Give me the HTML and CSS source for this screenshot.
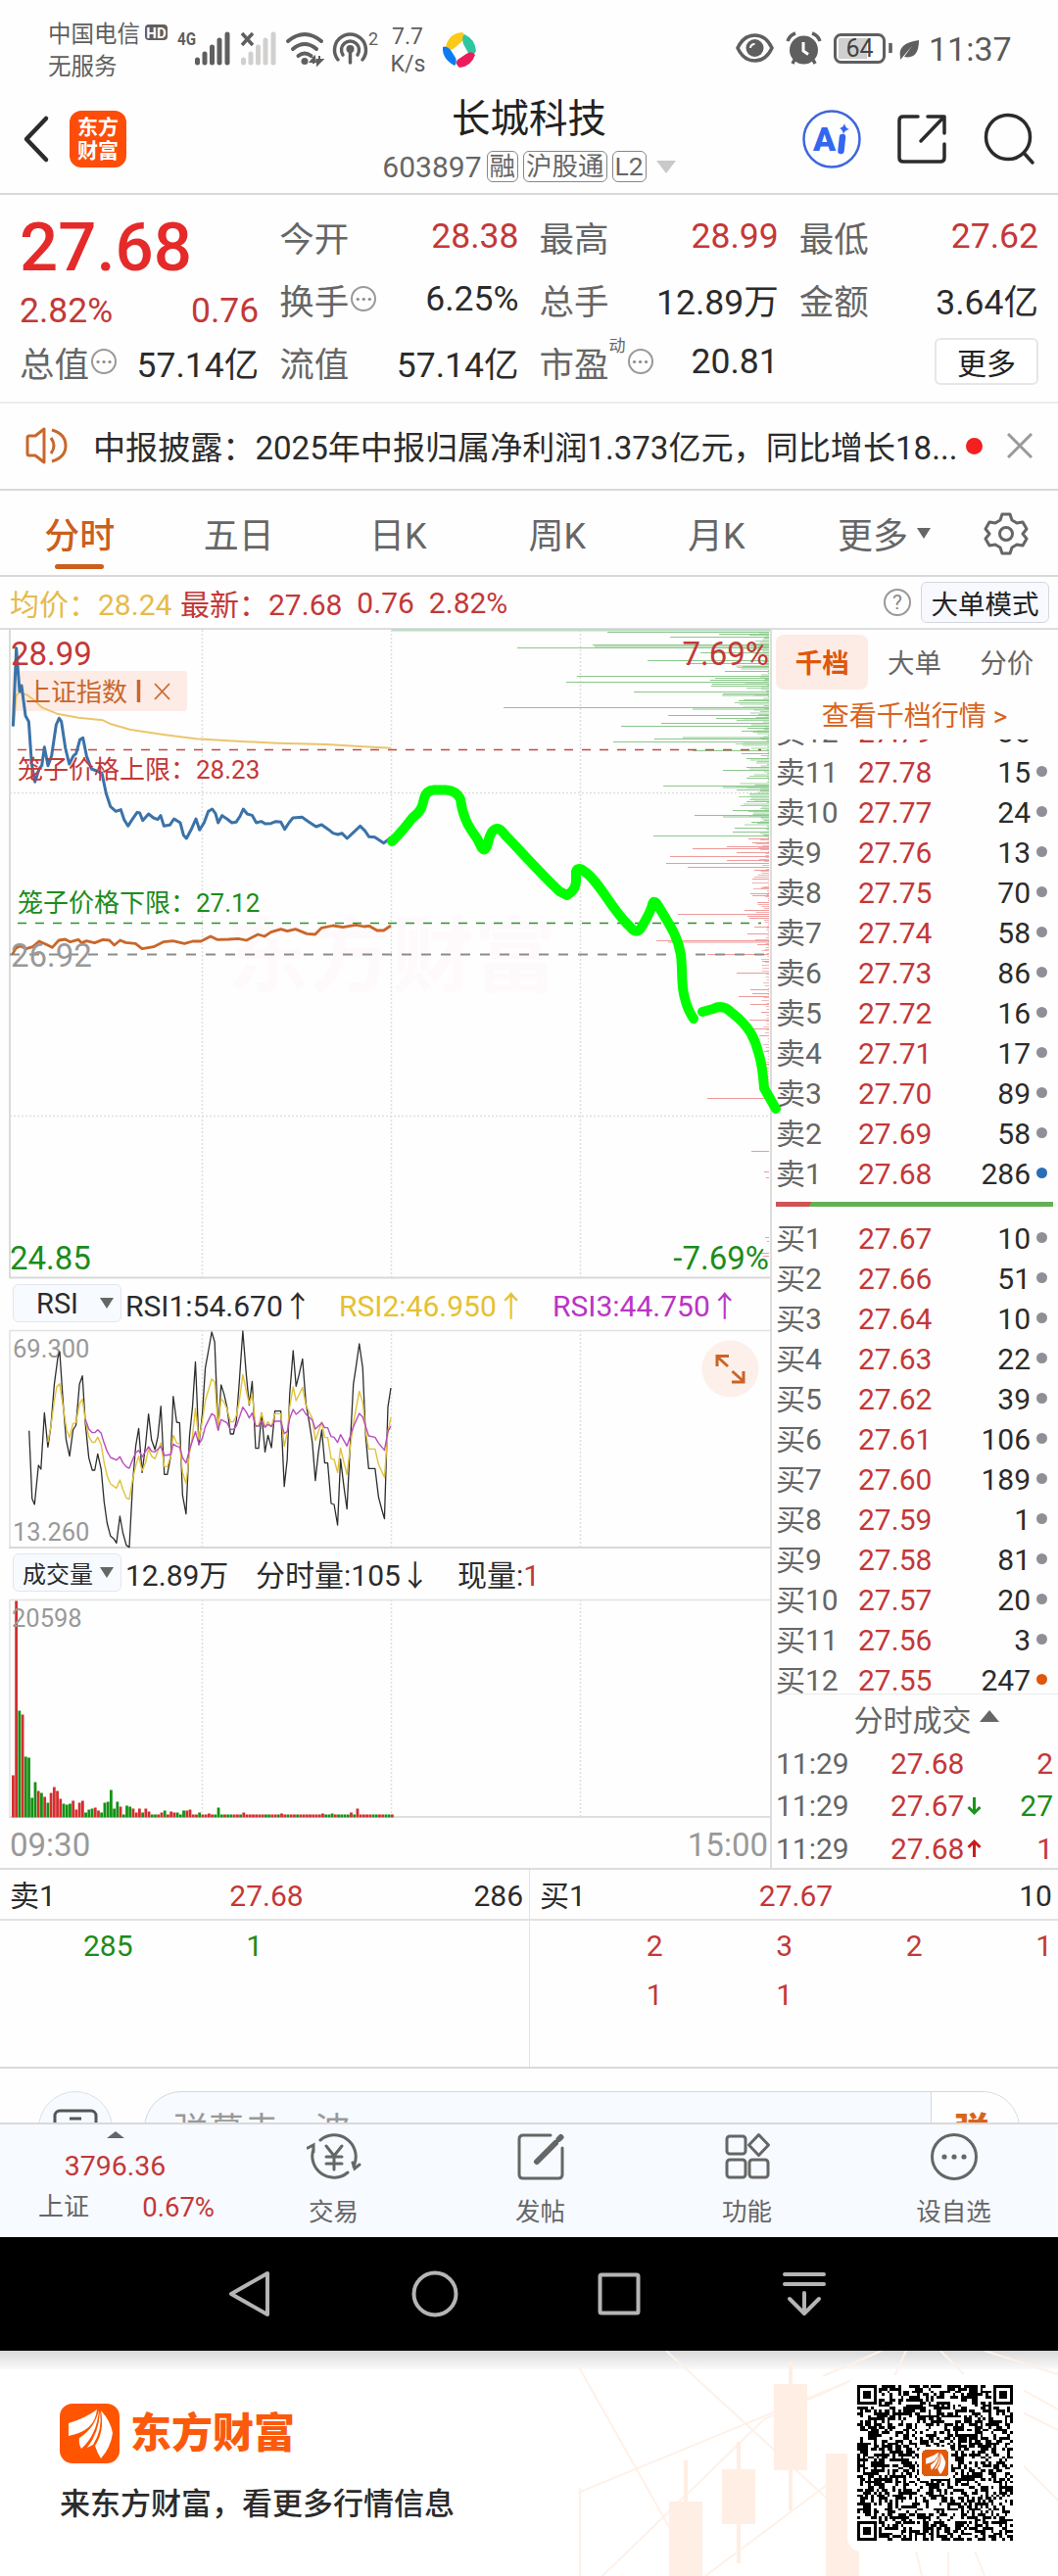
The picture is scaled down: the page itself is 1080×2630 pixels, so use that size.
FILE: index.html
```html
<!DOCTYPE html>
<html lang="zh-CN">

<head>
    <meta charset="UTF-8">
    <meta name="viewport" content="width=device-width, initial-scale=1.0">
    <title>长城科技 603897</title>
    <link rel="stylesheet" href="styles.css">
</head>

<body>
    <!-- Status bar -->
    <div class="status-bar">
        <div class="carrier">
            <div>中国电信</div>
            <div>无服务</div>
        </div>
        <svg class="status-left" width="350" height="60" viewBox="145 19 350 60">
            <rect x="148" y="25" width="23" height="16" rx="4" fill="#5f5f5f" />
            <text x="159.5" y="38.500" font-size="15" font-weight="700" fill="#fff" text-anchor="middle">HD</text>
            <text x="181" y="46" font-size="18" font-weight="700" fill="#5f5f5f" textLength="19" lengthAdjust="spacingAndGlyphs">4G</text>
            <path d="M201.500 61v3M209 55v9M216.500 48v16M224 41v23M232 35v29" stroke="#5f5f5f" stroke-width="5" stroke-linecap="round" />
            <path d="M248.500 61v3M256 55v9M263.500 48v16M271 41v23M279 35v29" stroke="#d2cfcf" stroke-width="5" stroke-linecap="round" />
            <path d="M247 34l11 12M258 34l-11 12" stroke="#5f5f5f" stroke-width="3.500" />
            <g fill="none" stroke="#5f5f5f" stroke-width="4" stroke-linecap="round">
                <path d="M294 42q17-14 34 0M299 50q12-10 24 0M304.500 57q6.500-5 13 0" />
                <path d="M345 61a16 16 0 1 1 25 0M350 56a9 9 0 1 1 15 0" stroke-width="3.500" />
                <path d="M357.500 51v13" stroke-width="3.500" />
            </g>
            <circle cx="311" cy="62.500" r="3.500" fill="#5f5f5f" />
            <circle cx="357.500" cy="50" r="4" fill="#5f5f5f" />
            <path d="M321 58l-4 5h5zM320 58v7M324 66l5-5h-5zM326 57v8" fill="#5f5f5f" stroke="#5f5f5f" stroke-width="2" />
            <text x="376" y="46" font-size="18" fill="#5f5f5f">2</text>
            <text x="416" y="45" font-size="23" fill="#5f5f5f" text-anchor="middle">7.7</text>
            <text x="416.500" y="73" font-size="23" fill="#5f5f5f" text-anchor="middle">K/s</text>
            <path d="M455 48q3-14 17-15q4 3 1 8l-9 8q-5 4-9-1z" fill="#fbc918" />
            <path d="M474 35q11 5 12 17q-3 6-8 2l-5-9q-2-7 1-10z" fill="#2cc7a0" />
            <path d="M485 56q-4 12-16 13q-5-4-2-8l9-6q6-4 9 1z" fill="#ec1c5a" />
            <path d="M464 67q-13-7-12-19q4-2 8 3l5 8q2 5-1 8z" fill="#0d7cf2" />
        </svg>
        <svg class="status-right" width="290" height="60" viewBox="745 19 290 60">
            <g fill="none" stroke="#5f5f5f" stroke-width="3.500">
                <path d="M753 49q6-13 17.500-13t17.500 13q-6 13-17.500 13t-17.500-13z" />
                <rect x="852.500" y="35.500" width="50" height="28" rx="6" stroke-width="3" />
            </g>
            <circle cx="770.500" cy="49" r="9" fill="#5f5f5f" />
            <path d="M770.500 45a4.500 4.500 0 0 0-4.500 4" stroke="#fff" stroke-width="2" fill="none" />
            <circle cx="820.500" cy="51" r="14.500" fill="#5f5f5f" />
            <path d="M820 43v9l5 3.500" fill="none" stroke="#fff" stroke-width="3" />
            <path d="M804 42q2-6 8-8M837 42q-2-6-8-8M811 61l-2 4M830 61l2 4" fill="none" stroke="#5f5f5f" stroke-width="3.500" />
            <rect x="856" y="39" width="29" height="21" fill="#cfcfcf" />
            <text x="877.500" y="57.500" font-size="25" fill="#444" text-anchor="middle">64</text>
            <path d="M909 44v10" stroke="#5f5f5f" stroke-width="3.500" />
            <path d="M919 58q-3-14 19-17q0 20-15 17l8-11-12 14z" fill="#5f5f5f" />
            <text x="948" y="62" font-size="34" fill="#5a5a5a">11:37</text>
        </svg>
    </div>

    <!-- Title bar -->
    <header class="header">
        <div class="header-left">
            <svg width="30" height="50" viewBox="0 0 30 50"><path d="M26 4L6 25l20 21" fill="none" stroke="#2b2b2b" stroke-width="4.500" stroke-linecap="round" stroke-linejoin="round" /></svg>
            <div class="app-logo"><span>东方</span><span>财富</span></div>
        </div>
        <div class="header-title">
            <h1>长城科技</h1>
            <div class="code">603897<span class="badge">融</span><span class="badge">沪股通</span><span class="badge">L2</span><i class="caret"></i></div>
        </div>
        <div class="header-right">
            <svg width="60" height="60" viewBox="0 0 60 60">
                <circle cx="30" cy="30" r="28.500" fill="none" stroke="#3f66dc" stroke-width="2.500" />
                <text x="11" y="42" font-size="34" font-weight="900" fill="#3466f0" textLength="24">A</text>
                <path d="M41 28l-1.500 14" stroke="#3466f0" stroke-width="6.500" stroke-linecap="round" />
                <path d="M43 14q1 5 5 6q-5 1-6 5q-1-5-4-6q4-1 5-5z" fill="#3466f0" />
            </svg>
            <svg width="52" height="52" viewBox="0 0 52 52"><path d="M22 3H7q-4 0-4 4v38q0 4 4 4h38q4 0 4-4V31M32 3h17v17M49 3L25 28" fill="none" stroke="#2b2b2b" stroke-width="3.500" stroke-linecap="round" stroke-linejoin="round" /></svg>
            <svg width="54" height="54" viewBox="0 0 54 54"><circle cx="26" cy="25" r="22.500" fill="none" stroke="#2b2b2b" stroke-width="3.500" /><path d="M42 41l9 10" stroke="#2b2b2b" stroke-width="3.500" stroke-linecap="round" /></svg>
        </div>
    </header>

    <!-- Quote numbers -->
    <section class="quote">
        <div class="price-box">
            <div class="price">27.68</div>
            <div class="change"><span>2.82%</span><span>0.76</span></div>
        </div>
        <div class="cell"><label>今开</label><b class="red">28.38</b></div>
        <div class="cell"><label>最高</label><b class="red">28.99</b></div>
        <div class="cell"><label>最低</label><b class="red">27.62</b></div>
        <div class="cell"><label>换手</label><i class="dots">···</i><b>6.25%</b></div>
        <div class="cell"><label>总手</label><b>12.89万</b></div>
        <div class="cell"><label>金额</label><b>3.64亿</b></div>
        <div class="cell"><label>总值</label><i class="dots">···</i><b>57.14亿</b></div>
        <div class="cell"><label>流值</label><b>57.14亿</b></div>
        <div class="cell"><label>市盈</label><sup>动</sup><i class="dots">···</i><b>20.81</b></div>
        <div class="cell"><button class="btn-more">更多</button></div>
    </section>

    <!-- News strip -->
    <div class="news">
        <svg width="46" height="40" viewBox="0 0 46 40">
            <path d="M3 12q0-2 2-2h6L20 3v34l-9-7H5q-2 0-2-2zM27 12q6 8 0 16M28 4q14 4 14 16t-14 16" fill="none" stroke="#c8682c" stroke-width="3" stroke-linejoin="round" />
        </svg>
        <span class="news-text">中报披露：2025年中报归属净利润1.373亿元，同比增长18...</span>
        <i class="news-dot"></i>
        <svg width="26" height="26" viewBox="0 0 26 26"><path d="M1 1l24 24M25 1L1 25" stroke="#999" stroke-width="3" /></svg>
    </div>

    <!-- Period tabs -->
    <nav class="tabs">
        <span class="tab active">分时</span>
        <span class="tab">五日</span>
        <span class="tab">日K</span>
        <span class="tab">周K</span>
        <span class="tab">月K</span>
        <span class="tab tab-more">更多<i class="caret-dark"></i></span>
        <svg width="46" height="46" viewBox="0 0 46 46" fill="none" stroke="#666" stroke-width="3" stroke-linejoin="round">
            <path d="M19 3h8l2 6 5 3 6-1 4 7-4 5 4 5-4 7-6-1-5 3-2 6h-8l-2-6-5-3-6 1-4-7 4-5-4-5 4-7 6 1 5-3z" />
            <circle cx="23" cy="23" r="6.500" />
        </svg>
    </nav>

    <div class="info-row">
        <span class="avg">均价：28.24</span>
        <span class="last">最新：27.68</span>
        <span class="last">0.76</span>
        <span class="last">2.82%</span>
        <i class="help">?</i>
        <button class="btn-mode">大单模式</button>
    </div>

    <!-- Charts and order book -->
    <main class="board">
        <div class="charts">
            <svg class="chart price-chart" width="787" height="663" viewBox="0 643 787 663">
                <text class="watermark" x="232" y="1006">东方财富</text>
                <g class="grid">
                    <path d="M206.500 643v661M399.500 643v661M592.500 643v661M10 809.500h776M10 1139.500h776" />
                </g>
                <path d="M10 643v662" stroke="#d9dcdc" stroke-width="2" />
                <path d="M10 1304.500h776" stroke="#d8d8d8" stroke-width="2" />
                <rect x="12" y="685" width="179" height="41" rx="4" fill="#fdebe5" />
                <g id="depth"></g>
                <path d="M18 765.500h759" stroke="#bf4a4a" stroke-width="1.500" stroke-dasharray="9 9" />
                <path d="M18 942.500h759" stroke="#2f8f2f" stroke-width="1.500" stroke-dasharray="9 9" />
                <path d="M10 974.500h774" stroke="#8c8c8c" stroke-width="1.800" stroke-dasharray="10 10" />
                <g id="priceLines" class="lines" transform="translate(0 640) scale(.333333)"></g>
                <text class="lb red" x="11" y="679">28.99</text>
                <text class="lb red" x="785" y="679" text-anchor="end">7.69%</text>
                <text class="lb green" x="10" y="1296">24.85</text>
                <text class="lb green" x="785" y="1296" text-anchor="end">-7.69%</text>
                <text class="lb gray" x="11" y="987">26.92</text>
                <text class="sm orange" x="26" y="716">上证指数</text>
                <path d="M141.500 694v23" stroke="#c8682c" stroke-width="3.500" />
                <path d="M158 698l15 16M173 698l-15 16" stroke="#c8682c" stroke-width="1.800" />
                <text class="sm red" x="18" y="795">笼子价格上限：28.23</text>
                <text class="sm green" x="18" y="931">笼子价格下限：27.12</text>
                <g class="marker">
                    <path d="M400 859C408 852 414 844 421 835C430 828 431 824 433 815Q435 807 443 806.500H455Q466 807 470 816C472 832 477 843 487 856L492 866Q496 870 498 861Q501 846 508 846Q511 846 516 853C530 867 545 885 571 910L579 914Q589 908 588 897V890Q590 884 597 890C612 900 625 930 643 946Q649 954 654 948C660 938 665 929 666 923Q668 918 672 925C682 942 692 955 695 975C697 990 695 1006 699 1019C701 1028 704 1034 708 1040" />
                    <path d="M717 1033L728 1030Q738 1025 747 1034C763 1046 770 1058 774 1074C778 1086 779 1096 780 1111L792 1132" />
                </g>
            </svg>

            <div class="toolbar">
                <span class="select"><em>RSI</em><i class="caret-dark"></i></span>
                <span class="w218">RSI1:54.670↑</span>
                <span class="w218 yellow">RSI2:46.950↑</span>
                <span class="purple">RSI3:44.750↑</span>
            </div>

            <svg class="chart" width="787" height="223" viewBox="0 1358 787 223">
                <g class="grid"><path d="M206.500 1358v222M399.500 1358v222M592.500 1358v222" /></g>
                <path d="M10 1358.500h776M10 1358v222" stroke="#e0e2e2" stroke-width="1.500" />
                <path d="M9 1580h777" stroke="#d8d8d8" stroke-width="2" />
                <text class="xs gray" x="13" y="1386">69.300</text>
                <text class="xs gray" x="13" y="1573">13.260</text>
                <g id="rsiLines" class="lines" transform="translate(0 1280) scale(.50378 .333333)"></g>
                <circle cx="745.500" cy="1397.500" r="29" fill="#fdefe9" />
                <path d="M743 1395l-11-10M732 1395v-10.500h12M747.500 1400l11 10M759 1400v11h-12" fill="none" stroke="#cb6427" stroke-width="3" />
            </svg>

            <div class="toolbar">
                <span class="select small"><em>成交量</em><i class="caret-dark"></i></span>
                <span class="w132">12.89万</span>
                <span class="w206">分时量:105↓</span>
                <span>现量:<b class="red">1</b></span>
            </div>

            <svg class="chart" width="787" height="223" viewBox="0 1633 787 223">
                <g class="grid"><path d="M206.500 1633v222M399.500 1633v222M592.500 1633v222" /></g>
                <path d="M10 1633.500h776M10 1633v222" stroke="#e0e2e2" stroke-width="1.500" />
                <path d="M9 1855h777" stroke="#dedede" stroke-width="2" />
                <g id="volume"></g>
                <text class="xs gray" x="12" y="1661">20598</text>
            </svg>
            <div class="time-axis"><span>09:30</span><span>15:00</span></div>
        </div>

        <aside class="book">
            <div class="book-tabs"><span class="on">千档</span><span>大单</span><span>分价</span></div>
            <div class="book-link">查看千档行情 &gt;</div>
            <div class="asks" id="asks"></div>
            <div class="ratio"><i></i></div>
            <div class="bids" id="bids"></div>
            <div class="ticks-title">分时成交<i class="caret-up"></i></div>
            <div class="tick"><span>11:29</span><b class="red">27.68</b><b class="qty red">2</b></div>
            <div class="tick"><span>11:29</span><b class="red">27.67</b><svg width="15" height="20" viewBox="0 0 15 20"><path d="M7.500 1v16M1.500 11l6 6 6-6" fill="none" stroke="#1b941b" stroke-width="3" /></svg><b class="qty green">27</b></div>
            <div class="tick"><span>11:29</span><b class="red">27.68</b><svg width="15" height="20" viewBox="0 0 15 20"><path d="M7.500 19V3M1.500 9l6-6 6 6" fill="none" stroke="#c81e1e" stroke-width="3" /></svg><b class="qty red">1</b></div>
        </aside>
    </main>

    <!-- Queue details -->
    <section class="queue">
        <div class="queue-side">
            <div class="queue-head"><span>卖1</span><b class="red">27.68</b><span>286</span></div>
            <div class="queue-grid green"><span>285</span><span>1</span></div>
        </div>
        <div class="queue-side">
            <div class="queue-head"><span>买1</span><b class="red">27.67</b><span>10</span></div>
            <div class="queue-grid red"><span>2</span><span>3</span><span>2</span><span>1</span><span>1</span><span>1</span></div>
        </div>
    </section>

    <div class="danmu">
        <div class="danmu-btn">
            <svg width="46" height="40" viewBox="0 0 46 40"><rect x="2" y="2" width="42" height="36" rx="5" fill="none" stroke="#555" stroke-width="3" /><path d="M17 10h12" stroke="#555" stroke-width="3" /></svg>
        </div>
        <div class="danmu-input"><span>弹幕走一波</span><b>弹</b></div>
    </div>

    <nav class="bottom-nav">
        <div class="index">
            <i class="caret-up small"></i>
            <div class="index-value">3796.36</div>
            <div class="index-row"><span>上证</span><b>0.67%</b></div>
        </div>
        <div class="nav-item">
            <svg width="56" height="50" viewBox="0 0 56 50" fill="none" stroke="#666" stroke-width="3" stroke-linecap="round">
                <path d="M14 8A22 22 0 0 1 49 32l-1 3M42 41A22 22 0 0 1 7 17l0-2M1 16l6-3v7M54 33l-5 4-2-6" />
                <path d="M20 14l8 10 8-10M28 24v14M20 25h16M20 32h16" />
            </svg>
            <span>交易</span>
        </div>
        <div class="nav-item">
            <svg width="50" height="50" viewBox="0 0 50 50" fill="none" stroke="#666" stroke-width="3" stroke-linecap="round">
                <path d="M35 3H7Q3 3 3 7v36q0 4 4 4h36q4 0 4-4V16" />
                <path d="M21 30L40 11M43.500 7l2-2" stroke-width="6" />
            </svg>
            <span>发帖</span>
        </div>
        <div class="nav-item">
            <svg width="48" height="50" viewBox="0 0 48 50" fill="none" stroke="#666" stroke-width="3" stroke-linejoin="round">
                <rect x="3" y="4" width="19" height="18" rx="3" />
                <path d="M35.500 2.500l10 10.500-10 10.500L25.500 13z" />
                <rect x="3" y="28" width="19" height="18" rx="3" />
                <rect x="26" y="28" width="19" height="18" rx="3" />
            </svg>
            <span>功能</span>
        </div>
        <div class="nav-item">
            <svg width="50" height="50" viewBox="0 0 50 50"><circle cx="25" cy="25" r="22.500" fill="none" stroke="#666" stroke-width="3" /><g fill="#666"><circle cx="15" cy="25" r="2.600" /><circle cx="25" cy="25" r="2.600" /><circle cx="35" cy="25" r="2.600" /></g></svg>
            <span>设自选</span>
        </div>
    </nav>

    <div class="system-nav">
        <svg width="48" height="50" viewBox="0 0 48 50"><path d="M42 4v42L5 25z" /></svg>
        <svg width="48" height="50" viewBox="0 0 48 50"><circle cx="24" cy="25" r="21.500" /></svg>
        <svg width="48" height="50" viewBox="0 0 48 50"><rect x="4.500" y="5.500" width="39" height="39" rx="1.500" /></svg>
        <svg width="48" height="50" viewBox="0 0 48 50"><path d="M4 5h40M4 15h40M24 24v20M9 30l15 15 15-15" /></svg>
    </div>

    <!-- Share footer -->
    <footer class="footer">
        <svg class="footer-bg" width="500" height="230" viewBox="580 2400 500 230">
            <g stroke="#fef1e8" stroke-width="2" fill="none">
                <path d="M680 2400L865 2570M590 2545L870 2430M615 2630L780 2470 870 2430M720 2630L880 2510M590 2415L683 2580M592 2540v90M900 2400l-60 26M925 2400l-12 26M960 2400l24 24M1005 2400l75 24M1044 2440l36 20M1044 2463l36 18M1044 2517l36 36M935 2604l6 26M968 2604v26M995 2604l10 26" />
            </g>
            <g fill="#ffeee3">
                <path d="M683 2554h34v76h-34zM698 2512h4v42h-4zM737 2521h34v56h-34zM752 2493h4v124h-4zM790 2434h34v88h-34zM805 2411h4v152h-4zM843 2505h34v125h-34z" />
            </g>
        </svg>
        <div class="footer-text">
            <div class="brand">
                <svg width="61" height="61" viewBox="0 0 61 61"><rect width="61" height="61" rx="13" fill="#ff5500" /><path id="leaf" d="M9 20Q26 15 38 6Q36 28 9 33zM40 6Q38 32 22 46Q19 41 20 35Q36 25 40 6zM42 7Q52 18 54 30Q52 45 42 56Q38 50 36 43Q46 28 42 7zM41 8Q44 26 34 42L28 45Q40 30 41 8z" fill="#fff" /></svg>
                <strong>东方财富</strong>
            </div>
            <p>来东方财富，看更多行情信息</p>
        </div>
        <div class="qr-card">
            <svg width="159" height="159" viewBox="0 0 57 57" shape-rendering="crispEdges">
                <path id="qr" fill="#000" />
                <rect x="22.500" y="22.500" width="12" height="12" rx="1.500" fill="#fff" />
                <rect x="23.700" y="23.700" width="9.800" height="9.800" rx="1.500" fill="#e05a0c" />
                <use href="#leaf" transform="translate(23.700 23.700) scale(.16)" shape-rendering="auto" />
            </svg>
        </div>
    </footer>

    <script src="script.js"></script>
</body>

</html>
```

FILE: styles.css
```css
/* Base */
* {
    box-sizing: border-box;
}

body {
    margin: 0;
    width: 1080px;
    height: 2630px;
    background: #fefefe;
    font-family: Roboto, "Noto Sans CJK SC", sans-serif;
    color: #2b2b2b;
    overflow: hidden;
}

svg {
    display: block;
    flex: none;
}

b,
i,
em {
    font-weight: 400;
    font-style: normal;
}

button {
    font-family: inherit;
    color: #222;
    padding: 0;
}

.red {
    color: #c33838;
    fill: #c33838;
}

.green {
    color: #1b8c1b;
    fill: #1b8c1b;
}

.gray {
    fill: #999;
}

.orange {
    fill: #c8682c;
}

.yellow {
    color: #e6c12f;
}

.purple {
    color: #b935c4;
}

/* Small triangles */
.caret,
.caret-dark,
.caret-up {
    display: block;
    width: 0;
    height: 0;
    border-style: solid;
    border-color: transparent;
}

.caret {
    border-width: 13px 10px 0;
    border-top-color: #c9c9c9;
}

.caret-dark {
    border-width: 11px 7px 0;
    border-top-color: #666;
}

.caret-up {
    border-width: 0 10px 12px;
    border-bottom-color: #666;
}

.caret-up.small {
    border-width: 0 9px 7px;
}

/* Status bar */
.status-bar {
    display: flex;
    height: 98px;
    padding: 19px 45px 0 49px;
}

.carrier {
    width: 96px;
    font-size: 23.5px;
    line-height: 33px;
    color: #5f5f5f;
    white-space: nowrap;
}

.status-right {
    margin-left: auto;
}

/* Title bar */
.header {
    display: flex;
    justify-content: space-between;
    height: 101px;
    border-bottom: 2px solid #d9d9d9;
}

.header-left,
.header-right {
    display: flex;
    align-items: center;
    width: 300px;
    height: 87px;
}

.header-left {
    padding-left: 21px;
    gap: 20px;
}

.header-right {
    justify-content: flex-end;
    padding-right: 23px;
    gap: 36px;
}

.app-logo {
    display: flex;
    flex-direction: column;
    align-items: center;
    justify-content: center;
    width: 58px;
    height: 58px;
    border-radius: 12px;
    background: #fd4d08;
    color: #fff;
    font-size: 21px;
    font-weight: 700;
    line-height: 24px;
}

.header-title h1 {
    margin: 0;
    font-size: 39.5px;
    font-weight: 400;
    line-height: 48px;
    text-align: center;
    color: #222;
}

.code {
    display: flex;
    align-items: center;
    justify-content: center;
    gap: 5px;
    height: 48px;
    font-size: 30px;
    color: #666;
}

.badge {
    height: 32px;
    padding: 0 2px;
    border: 1.500px solid #888;
    border-radius: 6px;
    font-size: 26.5px;
    line-height: 29px;
}

.code .caret {
    margin-left: 5px;
}

/* Quote */
.quote {
    display: grid;
    grid-template-columns: repeat(4, 1fr);
    grid-template-rows: repeat(3, 64px);
    column-gap: 21px;
    height: 213px;
    padding: 10px 20px 0 20px;
    border-bottom: 2px solid #ececec;
}

.price-box {
    grid-row: span 2;
    padding-top: 1px;
}

.price {
    font-size: 69px;
    font-weight: 500;
    line-height: 86px;
    color: #e52a2a;
}

.change {
    display: flex;
    justify-content: space-between;
    font-size: 35.5px;
    line-height: 42px;
    color: #c33838;
}

.cell {
    display: flex;
    align-items: center;
    font-size: 35.5px;
    white-space: nowrap;
}

.cell label {
    color: #666;
}

.cell b {
    margin-left: auto;
}

.cell sup {
    align-self: flex-start;
    width: 17px;
    margin-top: 6px;
    font-size: 17px;
    line-height: 20px;
    color: #666;
}

.dots {
    width: 26px;
    height: 26px;
    margin-left: 2px;
    border: 2px solid #999;
    border-radius: 50%;
    color: #888;
    font-size: 20px;
    font-weight: 700;
    line-height: 22px;
    text-align: center;
}

.btn-more {
    width: 106px;
    height: 48px;
    margin-left: auto;
    border: 2px solid #e6e6e6;
    border-radius: 6px;
    background: #fff;
    font-size: 30px;
}

/* News */
.news {
    display: flex;
    align-items: center;
    height: 89px;
    padding: 0 26px 1px 25px;
    border-bottom: 2px solid #d9d9d9;
    font-size: 33.1px;
}

.news-text {
    width: 890px;
    margin-left: 24px;
    white-space: nowrap;
}

.news-dot {
    width: 17px;
    height: 17px;
    margin-left: 1px;
    margin-right: auto;
    border-radius: 50%;
    background: #f3201f;
}

/* Tabs */
.tabs {
    display: flex;
    height: 88px;
    border-bottom: 2px solid #d9d9d9;
    font-size: 36px;
    color: #666;
}

.tab {
    display: flex;
    flex-direction: column;
    align-items: center;
    width: 162.5px;
    line-height: 95px;
}

.tab.active {
    color: #cb5f1c;
    font-weight: 500;
}

.tab.active::after {
    content: "";
    width: 50px;
    height: 5px;
    margin-top: -20px;
    border-radius: 3px;
    background: #cb5f1c;
}

.tab-more {
    flex-direction: row;
    align-items: flex-start;
    justify-content: center;
    gap: 9px;
    width: 180px;
}

.tab-more .caret-dark {
    margin-top: 38px;
}

.tabs svg {
    margin: 21px 0 0 11px;
}

/* Info row */
.info-row {
    display: flex;
    align-items: center;
    height: 54px;
    padding: 0 9px 0 10px;
    border-bottom: 2px solid #dcdede;
    font-size: 30px;
}

.avg {
    width: 174px;
    color: #e5bb4c;
}

.last {
    margin-right: 15px;
    color: #c33838;
}

.help {
    width: 28px;
    height: 28px;
    margin-left: auto;
    border: 2px solid #999;
    border-radius: 50%;
    color: #888;
    font-size: 21px;
    line-height: 24px;
    text-align: center;
}

.btn-mode {
    width: 131px;
    height: 42px;
    margin-left: 10px;
    border: 1.500px solid #d4d8de;
    border-radius: 6px;
    background: #f7f9ff;
    font-size: 27.5px;
}

/* Charts */
.board {
    display: flex;
    height: 1266px;
    border-bottom: 2px solid #dcdcdc;
}

.charts {
    width: 788px;
    border-right: 2px solid #dcdcdc;
}

.chart {
    position: relative;
    overflow: visible;
}

.price-chart {
    z-index: 2;
}

.grid path {
    fill: none;
    stroke: #dfdfdf;
    stroke-width: 1.500;
    stroke-dasharray: 2 2;
}

.lines polyline {
    fill: none;
    stroke-linejoin: round;
    vector-effect: non-scaling-stroke;
}

.watermark {
    font-size: 84px;
    font-weight: 700;
    fill: #fefafc;
}

.lb {
    font-size: 33px;
}

.sm {
    font-size: 26px;
}

.xs {
    font-size: 25.5px;
}

.marker {
    fill: none;
    stroke: #00fe00;
    stroke-width: 10;
    stroke-linecap: round;
    stroke-linejoin: round;
}

.toolbar {
    display: flex;
    align-items: center;
    height: 52px;
    padding: 0 0 3px 13px;
    font-size: 30px;
    white-space: nowrap;
}

.select {
    display: flex;
    align-items: center;
    justify-content: flex-end;
    gap: 22px;
    width: 111px;
    height: 39px;
    margin-right: 4px;
    padding-right: 7px;
    border: 1.500px solid #e2e6ee;
    border-radius: 6px;
    background: #f7faff;
    font-size: 29px;
}

.select.small {
    gap: 7px;
    font-size: 24px;
}

.w218 {
    width: 218px;
}

.w132 {
    width: 133px;
}

.w206 {
    width: 206px;
}

.time-axis {
    display: flex;
    justify-content: space-between;
    padding: 0 2px 0 10px;
    font-size: 33px;
    line-height: 55px;
    color: #999;
}

/* Order book */
.book {
    width: 292px;
    padding: 5px 5px 0 4px;
    font-size: 30px;
}

.book-tabs {
    display: flex;
    height: 56px;
    font-size: 27.5px;
    line-height: 60px;
    color: #666;
    text-align: center;
}

.book-tabs span {
    width: 95px;
}

.book-tabs .on {
    border-radius: 8px;
    background: #fdece5;
    color: #e0560b;
    font-weight: 700;
}

.book-link {
    height: 51px;
    font-size: 28px;
    line-height: 55px;
    text-align: center;
    color: #d9641c;
}

.asks {
    display: flex;
    flex-direction: column;
    justify-content: flex-end;
    height: 464px;
    overflow: hidden;
}

.level {
    display: flex;
    align-items: center;
    flex: none;
    height: 41px;
    line-height: 41px;
}

.level span {
    width: 84px;
    color: #666;
}

.level .qty {
    flex: 1;
    text-align: right;
}

.level i {
    width: 11px;
    height: 11px;
    margin: -3px 6px 0;
    border-radius: 50%;
    background: #8f8f96;
}

.level i.blue {
    background: #2a6db8;
}

.level i.hot {
    background: #e0560b;
}

.ratio {
    height: 5px;
    margin: 8px 0 12px;
    background: linear-gradient(115deg, #cf5454 33px, #63b155 33px);
}

.bids {
    height: 486px;
    margin-right: -5px;
    padding-right: 5px;
    border-bottom: 1px solid #ececec;
}

.ticks-title {
    display: flex;
    align-items: center;
    justify-content: center;
    gap: 8px;
    height: 49px;
    padding: 0 0 2px 24px;
    color: #666;
}

.ticks-title .caret-up {
    margin-top: -4px;
}

.tick {
    display: flex;
    align-items: center;
    height: 43.3px;
    line-height: 43px;
}

.tick span {
    width: 117px;
    color: #666;
}

.tick svg {
    margin-left: 3px;
}

.tick .qty {
    margin-left: auto;
}

/* Queue */
.queue {
    display: flex;
    height: 203px;
    border-bottom: 2px solid #d9d9d9;
    font-size: 30px;
}

.queue-side {
    width: 540px;
}

.queue-side + .queue-side {
    border-left: 1px solid #e4e4e4;
}

.queue-head {
    display: grid;
    grid-template-columns: 1fr 1fr 1fr;
    height: 52px;
    padding: 0 6px 0 10px;
    border-bottom: 2px solid #e2e2e2;
    line-height: 54px;
    text-align: center;
}

.queue-head span:first-child {
    text-align: left;
}

.queue-head span:last-child {
    text-align: right;
}

.queue-grid {
    display: grid;
    grid-template-columns: repeat(4, 132.500px);
    padding: 1px 0 0 3px;
    line-height: 50px;
    text-align: right;
}

/* Danmu row, cut off by the bottom nav */
.danmu {
    display: flex;
    height: 55px;
    padding: 23px 0 0 39px;
    overflow: hidden;
}

.danmu-btn {
    width: 76px;
    height: 76px;
    padding: 17px 0 0 14px;
    border: 1.500px solid #dcdfe4;
    border-radius: 50%;
    background: #f7faff;
}

.danmu-input {
    display: flex;
    width: 894px;
    height: 76px;
    margin-left: 32px;
    border: 1.500px solid #d4d7dc;
    border-radius: 38px;
    background: #f7faff;
    color: #999;
    font-size: 36px;
    line-height: 80px;
    overflow: hidden;
}

.danmu-input span {
    width: 803px;
    padding-left: 29px;
    border-right: 1.500px solid #d4d7dc;
}

.danmu-input b {
    flex: 1;
    padding-left: 23px;
    background: #fefefe;
    color: #d9641c;
    font-weight: 900;
}

/* Bottom nav */
.bottom-nav {
    display: flex;
    height: 117px;
    border-top: 2px solid #d9d9d9;
    background: #f7faff;
    color: #666;
}

.index {
    display: flex;
    flex-direction: column;
    align-items: center;
    width: 235px;
    padding-top: 7px;
}

.index-value {
    margin-top: 12px;
    font-size: 28.5px;
    line-height: 34px;
    color: #c33838;
}

.index-row {
    display: flex;
    justify-content: space-between;
    width: 180px;
    margin-left: 23px;
    font-size: 26px;
    line-height: 49px;
}

.index-row b {
    font-size: 27.5px;
    color: #c33838;
}

.nav-item {
    display: flex;
    flex-direction: column;
    align-items: center;
    width: 211px;
    padding-top: 8px;
    font-size: 25.5px;
    line-height: 63px;
}

/* System nav */
.system-nav {
    display: flex;
    gap: 140.500px;
    height: 116px;
    padding: 33px 0 0 231px;
    background: #000;
}

.system-nav svg {
    fill: none;
    stroke: #b5b5b5;
    stroke-width: 4;
    stroke-linejoin: round;
    stroke-linecap: round;
}

/* Footer */
.footer {
    position: relative;
    display: flex;
    justify-content: space-between;
    height: 230px;
    padding: 25px 35px 0 61px;
    background: #fff;
}

.footer::before {
    content: "";
    position: absolute;
    inset: 0 0 auto;
    height: 19px;
    background: linear-gradient(rgba(0, 0, 0, 0.15), rgba(0, 0, 0, 0.02));
}

.footer-bg {
    position: absolute;
    right: 0;
    top: 0;
}

.footer-text {
    padding-top: 29px;
}

.brand {
    display: flex;
    align-items: center;
    gap: 11px;
    font-size: 42px;
    color: #fb5a0c;
}

.brand strong {
    font-weight: 900;
    line-height: 61px;
}

.footer p {
    margin: 18px 0 0;
    font-size: 31px;
    font-weight: 500;
    line-height: 48px;
}

.qr-card {
    position: relative;
    width: 180px;
    height: 180px;
    padding: 10px;
    border-radius: 14px;
    background: #fff;
}
```

FILE: script.js
```js
const NS = 'http://www.w3.org/2000/svg';

function draw(parent, tag, attrs) {
    const el = document.createElementNS(NS, tag);
    for (const key in attrs) el.setAttribute(key, attrs[key]);
    document.getElementById(parent).appendChild(el);
}

// repeatable noise
let seed = 7;
function rand() {
    seed = (seed * 16807) % 2147483647;
    return seed / 2147483647;
}

// Price, average and index lines
const price = '40,305 50,65 60,198 66,180 78,272 88,290 97,420 107,475 120,435 128,425 136,368 147,425 158,395 172,300 181,280 188,290 200,370 212,420 225,395 233,388 245,345 254,340 265,395 280,435 300,443 312,448 325,510 338,550 355,565 370,560 380,590 392,610 405,590 420,568 428,570 437,593 455,573 470,585 483,590 492,578 502,610 520,607 533,588 552,600 562,638 571,648 585,622 600,588 611,622 625,600 638,565 650,558 660,572 668,600 680,578 695,588 710,600 723,598 735,580 745,558 757,573 772,577 785,600 800,596 812,603 830,602 845,596 860,598 872,620 885,600 897,585 925,583 945,597 968,612 985,606 1005,620 1020,632 1035,636 1047,632 1063,648 1080,632 1103,610 1118,625 1130,643 1148,644 1175,662 1185,655 1197,645';
const average = '42,300 50,210 60,200 85,210 105,225 130,248 175,266 240,278 315,286 340,298 400,315 500,330 600,343 700,349 850,356 1000,360 1100,366 1197,371';
const index = '38,1003 48,985 62,977 80,986 100,980 120,963 140,972 160,982 180,960 200,957 215,965 240,958 250,968 265,962 290,968 315,958 335,960 350,975 368,960 385,967 415,970 435,986 470,980 500,965 530,962 565,970 590,963 615,963 645,948 665,958 700,957 730,955 755,960 790,942 810,948 830,935 860,926 880,932 905,926 940,940 965,942 985,922 1020,915 1050,920 1090,913 1115,918 1130,916 1155,930 1175,930 1197,915';
draw('priceLines', 'polyline', { points: average, stroke: '#ecc56c', 'stroke-width': 2 });
draw('priceLines', 'polyline', { points: index, stroke: '#c9662a', 'stroke-width': 2.8 });
draw('priceLines', 'polyline', { points: price, stroke: '#3b72a8', 'stroke-width': 3 });

// RSI lines
const rsi1 = '59,542 65,750 70,768 78,648 83,660 90,487 97,592 103,530 110,400 117,320 121,300 128,460 134,570 141,620 148,540 154,525 161,400 167,374 173,520 180,625 187,663 192,663 198,613 205,660 211,760 217,825 224,865 230,872 236,886 243,804 249,855 256,893 262,899 269,700 275,590 281,535 288,670 295,585 301,491 307,570 314,600 320,560 326,467 333,676 339,676 346,620 351,437 358,516 364,518 370,740 377,797 384,560 390,470 396,331 403,585 410,490 416,350 422,300 429,240 435,270 442,540 448,402 454,430 460,470 467,552 473,552 479,510 485,390 492,237 499,370 505,463 511,391 518,596 524,596 530,489 537,607 543,556 550,594 557,482 569,482 576,713 582,630 587,430 594,297 600,406 606,370 613,322 620,460 627,520 633,580 639,695 645,610 652,540 658,641 664,641 671,765 677,768 684,831 690,629 697,715 703,782 709,600 716,400 722,340 728,276 735,350 741,560 747,658 760,658 767,745 773,780 779,812 786,470 792,411';
const rsi2 = '97,577 103,530 110,450 115,408 121,398 128,470 135,540 141,563 148,520 154,517 161,460 167,445 173,510 180,560 187,578 192,578 198,562 205,585 211,640 217,680 224,705 236,718 243,693 249,722 256,748 262,752 269,690 275,650 281,620 288,665 295,640 301,598 307,620 314,628 326,580 333,652 339,652 346,620 351,556 358,580 364,582 370,670 377,704 384,610 390,560 396,473 403,570 410,510 416,450 429,384 435,392 442,530 448,444 454,455 460,475 467,515 473,515 479,495 485,450 492,370 499,420 505,460 511,430 518,528 524,528 530,487 537,530 543,515 550,530 557,490 569,490 576,590 582,550 587,470 594,408 600,450 613,410 620,465 633,505 639,572 645,545 652,515 658,563 664,563 671,628 677,630 684,670 690,595 697,640 703,676 709,600 716,520 728,421 735,455 741,545 747,598 760,598 767,645 779,685 786,545 792,502';
const rsi3 = '173,507 180,537 187,548 192,548 198,539 205,550 211,580 217,605 224,624 236,632 243,622 249,640 256,653 262,657 269,630 275,610 281,602 288,622 301,591 307,605 314,607 326,590 333,618 346,615 351,583 358,590 364,592 370,625 377,641 384,600 396,545 403,583 410,565 416,530 429,490 435,496 442,540 448,508 460,518 467,538 473,538 479,528 492,470 499,485 505,503 511,488 518,528 524,528 530,512 537,532 543,523 550,529 557,513 569,513 576,551 582,545 587,505 594,477 600,492 613,475 620,492 633,510 639,537 652,518 658,533 664,533 671,560 677,562 684,578 690,554 703,589 716,530 728,489 735,500 747,558 760,562 767,580 779,602 786,545 792,528';
draw('rsiLines', 'polyline', { points: rsi1, stroke: '#2e2e2e', 'stroke-width': 1.3 });
draw('rsiLines', 'polyline', { points: rsi2, stroke: '#e0c23a', 'stroke-width': 1.4 });
draw('rsiLines', 'polyline', { points: rsi3, stroke: '#b84cc0', 'stroke-width': 1.4 });

// Volume bars: r = up, g = down
const volume = 'r43 r221 g109 r105 g62 g61 g20 g36 r27 g25 r21 g15 r25 r31 r27 r19 g14 g13 g14 r17 r8 r15 r17 g5 g8 g9 r10 r7 g5 g15 g16 g28 g9 g16 r11 g3 g12 g11 r9 r5 r9 g5 r9 r6 g3 g3 r3 r5 g7 r3 r6 r5 g5 g3 g7 r7 r8 r3 r3 g5 r3 r3 r4 r3 g3 g10'.split(' ');
const spikes = { 73: 'r5', 85: 'r4', 98: 'r4', 101: 'g4', 107: 'r5', 109: 'r9' };
while (volume.length < 121) {
    volume.push(spikes[volume.length] || (rand() > 0.5 ? 'r3' : 'g3'));
}
volume.forEach((bar, i) => {
    const h = Number(bar.slice(1));
    draw('volume', 'rect', { x: 12 + i * 3.225, y: 1855.5 - h, width: 2.8, height: h, fill: bar[0] === 'r' ? '#d22f2f' : '#149214' });
});

// Volume by price, [y, start x]
const sellDepth = [[645, 620], [647, 734], [650, 684], [658, 605], [659.5, 607], [661, 528], [666, 715], [674, 661], [677, 700], [680, 758], [685, 740], [690, 589], [692, 730], [694, 725], [696, 578], [698, 727], [700, 726], [706, 647], [708, 738], [709.5, 737], [715, 754], [722, 514], [723.5, 707], [730, 682], [733, 731], [738, 675], [741, 634], [743, 763], [746, 757], [752.5, 697], [754, 668], [757, 626], [766, 707], [769, 757], [774, 762], [783, 762], [786, 738], [794, 762], [802, 677], [803.5, 738], [806, 752], [818, 762], [827, 748], [832, 709], [833.5, 738], [839, 767], [845, 750], [849, 748], [853, 667]];
const buyDepth = [[856, 764], [860, 768], [864, 742], [866, 707], [870, 752], [874, 684], [878, 742], [881, 680], [885, 702], [888, 770], [897, 768], [906, 777], [912, 766], [914, 768], [921, 773], [929, 760], [933, 692], [935, 763], [937, 765], [946, 770], [953, 763], [960, 670], [961.5, 682], [964, 773], [974, 722], [981, 778], [993, 752], [1010, 766], [1014, 768], [1017, 754], [1025, 766], [1033, 777], [1041, 765], [1050, 767], [1057, 775], [1073, 780], [1086, 780], [1121, 722], [1175, 767], [1196, 780], [1202, 782], [1263, 781], [1267, 783], [1279, 775], [1282, 779]];
function depthLine(y, x, color) {
    draw('depth', 'rect', { x: x, y: y, width: 785 - x, height: 1, fill: color });
}
for (let y = 645; y < 855; y += 1.5) depthLine(y, 784 - rand() * rand() * 40, '#a0d6a0');
for (let y = 855; y < 970; y += 2) depthLine(y, 784 - rand() * rand() * 18, '#f2b0b0');
for (let y = 970; y < 1110; y += 3) depthLine(y, 784 - rand() * rand() * 9, '#f2b8b8');
sellDepth.forEach(d => depthLine(d[0], d[1], '#8cc78c'));
buyDepth.forEach(d => depthLine(d[0], d[1], '#ee9a9a'));
draw('depth', 'rect', { x: 400, y: 642, width: 386, height: 2.5, fill: '#bcdcc4' });

// Order book levels
function addLevel(box, name, price, qty, dot) {
    document.getElementById(box).insertAdjacentHTML('beforeend',
        `<div class="level"><span>${name}</span><b class="red">${price}</b><b class="qty">${qty}</b><i class="${dot}"></i></div>`);
}
[36, 15, 24, 13, 70, 58, 86, 16, 17, 89, 58, 286].forEach((qty, i) => {
    addLevel('asks', '卖' + (12 - i), (27.79 - i * 0.01).toFixed(2), qty, i === 11 ? 'blue' : '');
});
const bidPrices = ['27.67', '27.66', '27.64', '27.63', '27.62', '27.61', '27.60', '27.59', '27.58', '27.57', '27.56', '27.55'];
[10, 51, 10, 22, 39, 106, 189, 1, 81, 20, 3, 247].forEach((qty, i) => {
    addLevel('bids', '买' + (i + 1), bidPrices[i], qty, i === 11 ? 'hot' : '');
});

// QR code
const size = 57;
function finder(x, y) {
    const corners = [[0, 0], [size - 7, 0], [0, size - 7]];
    for (const [cx, cy] of corners) {
        const dx = x - cx, dy = y - cy;
        if (dx >= -1 && dx <= 7 && dy >= -1 && dy <= 7) {
            const ring = Math.max(Math.abs(dx - 3), Math.abs(dy - 3));
            return ring === 3 || ring < 2 ? 1 : 0;
        }
    }
    return -1;
}
let d = '';
for (let y = 0; y < size; y++) {
    for (let x = 0; x < size; x++) {
        const f = finder(x, y);
        if (f === 1 || (f === -1 && rand() > 0.5)) d += `M${x} ${y}h1v1h-1z`;
    }
}
document.getElementById('qr').setAttribute('d', d);
```
